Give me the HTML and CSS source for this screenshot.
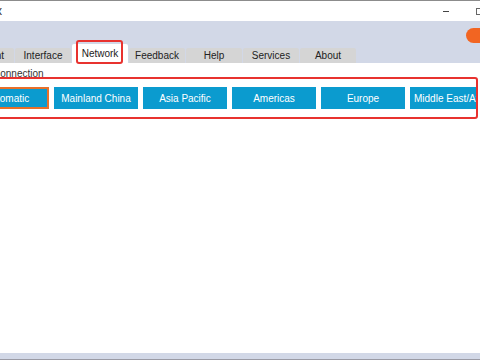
FILE: index.html
```html
<!DOCTYPE html>
<html lang="en">
  <head>
    <meta charset="UTF-8" />
    <meta name="viewport" content="width=device-width, initial-scale=1.0" />
    <link rel="stylesheet" href="styles.css">
    <title>Settings</title>
  </head>
  <body>
    <div class="window">
      <div class="titlebar">
        <span class="title">x</span>
        <div class="controls">
          <span class="minimize"></span>
          <span class="maximize"></span>
        </div>
      </div>
      <div class="header">
        <div class="header-top">
          <span class="pill"></span>
        </div>
        <div class="tabs">
          <div class="tab">Account</div>
          <div class="tab">Interface</div>
          <div class="tab active">Network</div>
          <div class="tab">Feedback</div>
          <div class="tab">Help</div>
          <div class="tab">Services</div>
          <div class="tab">About</div>
        </div>
      </div>
      <div class="content">
        <p class="label">Connection</p>
        <div class="options">
          <button class="region selected">Automatic</button>
          <button class="region">Mainland China</button>
          <button class="region">Asia Pacific</button>
          <button class="region">Americas</button>
          <button class="region">Europe</button>
          <button class="region">Middle East/Africa</button>
        </div>
      </div>
      <div class="statusbar"></div>
    </div>
  </body>
</html>
```

FILE: styles.css
```css
* {
  margin: 0;
  padding: 0;
  box-sizing: border-box;
  font-family: "Liberation Sans", Arial, sans-serif;
}
body {
  width: 480px;
  height: 360px;
  overflow: hidden;
  background: white;
}
.window {
  height: 360px;
  display: flex;
  flex-flow: column;
}
.titlebar {
  height: 21px;
  border-top: 1px solid #8c8c8c;
  background: white;
  display: flex;
  align-items: center;
  justify-content: space-between;
}
.title {
  font-size: 12px;
  color: #333;
  margin-left: -4px;
}
.controls {
  display: flex;
  align-items: center;
  gap: 27px;
  margin-right: -4px;
}
.minimize {
  width: 6px;
  height: 1px;
  background: #444;
}
.maximize {
  width: 8px;
  height: 7px;
  border: 1px solid #666;
}
.header {
  height: 42px;
  background: #d2d8e7;
  display: flex;
  flex-flow: column;
  justify-content: space-between;
}
.header-top {
  display: flex;
  justify-content: flex-end;
  padding-top: 7px;
}
.pill {
  width: 28px;
  height: 15px;
  border-radius: 8px;
  background: #f26522;
  margin-right: -14px;
}
.tabs {
  display: flex;
  align-items: flex-end;
  gap: 1px;
  margin-left: -42px;
}
.tab {
  position: relative;
  width: 56px;
  height: 15px;
  background: #d5d5d5;
  border-radius: 2px 2px 0 0;
  color: #222;
  font-size: 10px;
  line-height: 15px;
  text-align: center;
}
.tab.active {
  height: 19px;
  line-height: 19px;
  background: white;
}
.tab.active::after {
  content: "";
  position: absolute;
  top: -4px;
  bottom: -1px;
  left: 4px;
  right: 5px;
  border: 2px solid #e8322f;
  border-radius: 3px;
}
.content {
  flex: 1;
  background: white;
  padding-top: 5px;
}
.label {
  margin-left: -7px;
  font-size: 10px;
  line-height: 12px;
  color: #333;
}
.options {
  display: flex;
  gap: 5px;
  margin: -3px 2px 0 -45px;
  padding: 8px;
  border: 2px solid #e8322f;
  border-radius: 3px;
  overflow: hidden;
}
.region {
  flex: none;
  width: 84px;
  height: 22px;
  border: none;
  background: #0b9bcf;
  color: white;
  font-size: 10px;
  white-space: nowrap;
  overflow: hidden;
}
.region:last-child {
  text-align: left;
  padding-left: 4px;
}
.region.selected {
  border: 2px solid #e8702a;
}
.statusbar {
  height: 7px;
  background: #d2d8e7;
  border-bottom: 1px solid #9a9aa4;
}
```
